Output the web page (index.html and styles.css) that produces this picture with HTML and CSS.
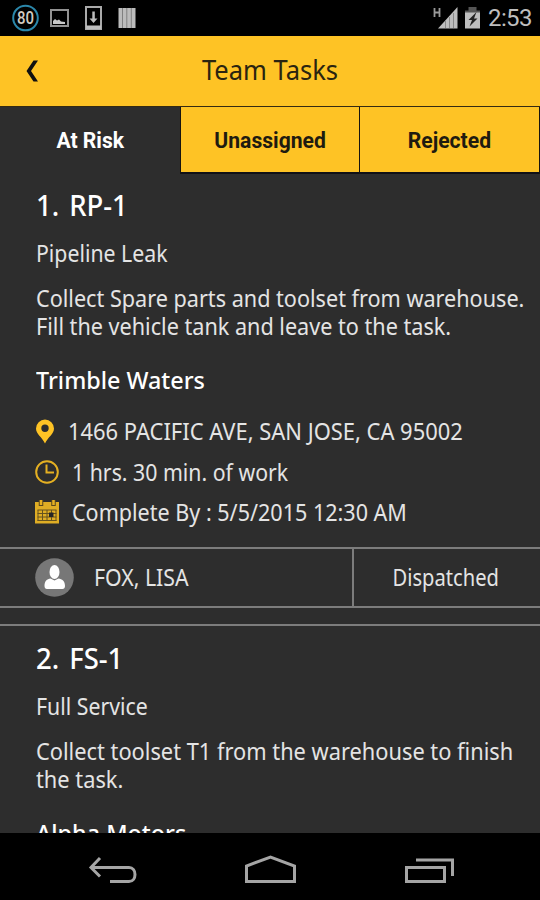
FILE: index.html
```
<!DOCTYPE html>
<html lang="en">
<head>
<meta charset="utf-8">
<title>Team Tasks</title>
<link rel="stylesheet" href="styles.css">
</head>
<body>
<div class="screen">
  <div class="status">
    <svg width="140" height="36" viewBox="0 0 140 36">
      <circle cx="25.500" cy="18" r="12.300" fill="#000" stroke="#2b87aa" stroke-width="2"/>
      <text x="25.500" y="24" class="speed" text-anchor="middle" textLength="17" lengthAdjust="spacingAndGlyphs">80</text>
      <path d="M51 10h17v16H51z" fill="none" stroke="#929292" stroke-width="2"/>
      <path d="M53 24v-3l2-2 2 1.500 2-1 2 2 4 .5v2z" fill="#c8c8c8"/>
      <path d="M86 7h15v22H86z" fill="none" stroke="#aaa" stroke-width="2"/>
      <path d="M86 25.500h15V29H86zM92.300 11.500h2.500v7h2.700l-4 4.500-4-4.500h2.800z" fill="#bdbdbd"/>
      <path d="M118.500 8h17v20h-17z" fill="#bcbcbc"/>
      <path d="M122.500 8v20M126.800 8v20M131.300 8v20" stroke="#808080" stroke-width="1"/>
    </svg>
    <div class="status-right">
      <svg width="50" height="36" viewBox="432 0 50 36">
        <path d="M434.500 8v9M439.500 8v9M434.500 12.500h5" stroke="#999" stroke-width="1.800" fill="none"/>
        <path d="M438 28.500L457.500 7v21.500z" fill="#bebebe"/>
        <path d="M445.500 21v7M449.500 17v11M453.500 13v15" stroke="#888" stroke-width="1"/>
        <path d="M465 10.500h3.500V7h8v3.500h3.500V17h-15z" fill="#555"/>
        <path d="M465 12.500h15v16h-15z" fill="#bebebe"/>
        <path d="M476.500 12l-8 8h3.500l-2.500 6.500 8-8H474z" fill="#222"/>
      </svg>
      <span class="clock">2:53</span>
    </div>
  </div>
  <header class="header">
    <svg class="back" width="14" height="24" viewBox="0 0 14 24"><path d="M8.500 1.500H13L6 12l7 10.500H8.500L1.500 12z" fill="#111"/></svg>
    <h1><span class="fit">Team Tasks</span></h1>
  </header>
  <nav class="tabs">
    <div class="tab active"><span class="fit">At Risk</span></div>
    <div class="tab"><span class="fit">Unassigned</span></div>
    <div class="tab"><span class="fit">Rejected</span></div>
  </nav>
  <main class="list">
    <article class="card">
      <h2><span class="fit">1. RP-1</span></h2>
      <p class="type"><span class="fit">Pipeline Leak</span></p>
      <p class="desc"><span class="fit">Collect Spare parts and toolset from warehouse.<br>Fill the vehicle tank and leave to the task.</span></p>
      <h3><span class="fit">Trimble Waters</span></h3>
      <div class="info place">
        <svg width="18" height="25" viewBox="0 0 18 25"><path fill-rule="evenodd" d="M9 .5a9 9 0 0 1 9 9C18 15 12 18 9 24.500 6 18 0 15 0 9.500a9 9 0 0 1 9-9zm0 5a3.700 3.700 0 1 0 0 7.400 3.700 3.700 0 0 0 0-7.400z" fill="#fec325"/></svg>
        <span class="fit">1466 PACIFIC AVE, SAN JOSE, CA 95002</span>
      </div>
      <div class="info time">
        <svg width="24" height="24" viewBox="0 0 24 24"><circle cx="12" cy="12" r="10.800" fill="none" stroke="#e5b022" stroke-width="2"/><path d="M11.500 4.500v8h7.500" fill="none" stroke="#e5b022" stroke-width="2"/></svg>
        <span class="fit">1 hrs. 30 min. of work</span>
      </div>
      <div class="info due">
        <svg width="24" height="25" viewBox="0 0 24 25">
          <path d="M0 2h24v21.500H0z" fill="#dfad24"/>
          <path d="M6 0v6M18.500 0v6" stroke="#5a481c" stroke-width="4.500"/>
          <path d="M6 0v5M18.500 0v5" stroke="#e5b022" stroke-width="2.500"/>
          <path d="M2.500 10h19M2.500 13.500h19M2.500 17h19M2.500 20.500h19M3 10v11M7.500 10v11M12 10v11M16.500 10v11M21 10v11" stroke="#66531f" stroke-width="1"/>
          <path d="M14 12.500h4.500V17H14z" fill="#262626"/>
        </svg>
        <span class="fit">Complete By : 5/5/2015 12:30 AM</span>
      </div>
      <footer class="assign">
        <div class="person">
          <svg width="39" height="39" viewBox="0 0 39 39"><circle cx="19.500" cy="19.500" r="19.300" fill="#777"/><ellipse cx="19.500" cy="14" rx="5" ry="7" fill="#fff"/><path d="M9.500 28c0-5 2.500-7 6-7.500l4 2 4-2c3.500.5 6.500 2.500 6.500 7.500 0 2-1 3-2.500 3H12c-1.500 0-2.500-1-2.500-3z" fill="#fff"/></svg>
          <span class="fit">FOX, LISA</span>
        </div>
        <div class="state"><span class="fit">Dispatched</span></div>
      </footer>
    </article>
    <article class="card second">
      <h2><span class="fit">2. FS-1</span></h2>
      <p class="type"><span class="fit">Full Service</span></p>
      <p class="desc"><span class="fit">Collect toolset T1 from the warehouse to finish<br>the task.</span></p>
      <h3><span class="fit">Alpha Motors</span></h3>
    </article>
  </main>
  <div class="navbar">
    <svg width="540" height="67" viewBox="0 833 540 67" fill="none" stroke="#a5a5a5" stroke-width="3">
      <path d="M100 858l-9 9.500 9 9M91 867.500h38c8 0 8 14 0 14h-19"/>
      <path d="M246.500 881.500V866l24-9 24 9v15.500z"/>
      <path d="M406.500 867.500h38v14h-38zM416 860h36.500v16"/>
    </svg>
  </div>
</div>
</body>
</html>
```
FILE: styles.css
```
* { box-sizing: border-box; }
body { margin: 0; background: #000; }
h1, h2, h3, p { margin: 0; font-weight: 400; }
svg { display: block; flex: none; }
.screen {
  width: 540px;
  height: 900px;
  display: flex;
  flex-direction: column;
  overflow: hidden;
  background: #2d2d2d;
  color: #e4e4e4;
  font: 400 23px/28px "Noto Sans", "Open Sans", sans-serif;
}
.fit {
  display: inline-block;
  white-space: nowrap;
  transform: scaleX(.925);
  transform-origin: left;
}
.status { height: 36px; flex: none; display: flex; align-items: center; background: #000; }
.speed { font: 500 18px Roboto, sans-serif; fill: #d0cbc2; }
.status-right { margin-left: auto; display: flex; align-items: center; }
.clock { width: 58px; padding-left: 6px; font: 400 24px/38px Roboto, sans-serif; letter-spacing: -.6px; color: #bebebe; }
.header {
  height: 70px;
  flex: none;
  display: grid;
  grid-template-columns: 1fr auto 1fr;
  align-items: center;
  background: #fec325;
  color: #2a2410;
}
.back { margin-left: 25px; }
.header h1 { font-size: 27px; line-height: 36px; padding-bottom: 2px; }
.header .fit { transform: scaleX(.945); transform-origin: center; }
.tabs {
  height: 68px;
  flex: none;
  display: grid;
  grid-template-columns: 181px 179px 180px;
  border-top: 1px solid #342a12;
  border-bottom: 2px solid #111116;
  background: #fec325;
}
.tab {
  border-right: 1px solid #17150f;
  text-align: center;
  color: #1f1b10;
  font: 700 22px/67px Roboto, sans-serif;
}
.tab .fit { transform: scaleX(.96); transform-origin: center; }
.tab.active { background: #2d2d2d; color: #fff; height: 67px; }
.list { height: 659px; flex: none; overflow: hidden; padding-top: 13px; }
.card h2 { font-size: 28px; line-height: 36px; font-weight: 500; color: #fff; word-spacing: 3px; }
.card h2 .fit { transform: scaleX(.98); }
.card h2, .card p, .card h3 { padding-left: 36px; }
.type { padding-top: 16px; }
.desc { padding-top: 17px; }
.desc .fit { transform: scaleX(.94); }
.card h3 { padding-top: 26px; font-size: 23px; font-weight: 500; color: #fff; }
.card h3 .fit { transform: scaleX(1.015); }
.info { display: flex; align-items: center; height: 28px; padding-left: 35px; gap: 13px; }
.info.place { margin-top: 23px; padding-left: 36px; gap: 14px; }
.place .fit { transform: scaleX(.953); }
.info.time { margin-top: 13px; }
.info.due { margin-top: 12px; }
.due .fit { transform: scaleX(.937); }
.assign {
  display: flex;
  height: 61px;
  margin-top: 21px;
  border-top: 2px solid #7c7c7c;
  border-bottom: 2px solid #7c7c7c;
}
.person { width: 354px; display: flex; align-items: center; gap: 20px; padding-left: 35px; border-right: 2px solid #7c7c7c; }
.assign .fit { margin-bottom: 2px; }
.state { flex: 1; display: flex; align-items: center; justify-content: center; padding-right: 2px; }
.state .fit { transform: scaleX(.875); transform-origin: center; }
.second { margin-top: 16px; border-top: 2px solid #7c7c7c; padding-top: 14px; }
.second .desc .fit { transform: scaleX(.948); }
.navbar { height: 67px; flex: none; background: #000; }
```
